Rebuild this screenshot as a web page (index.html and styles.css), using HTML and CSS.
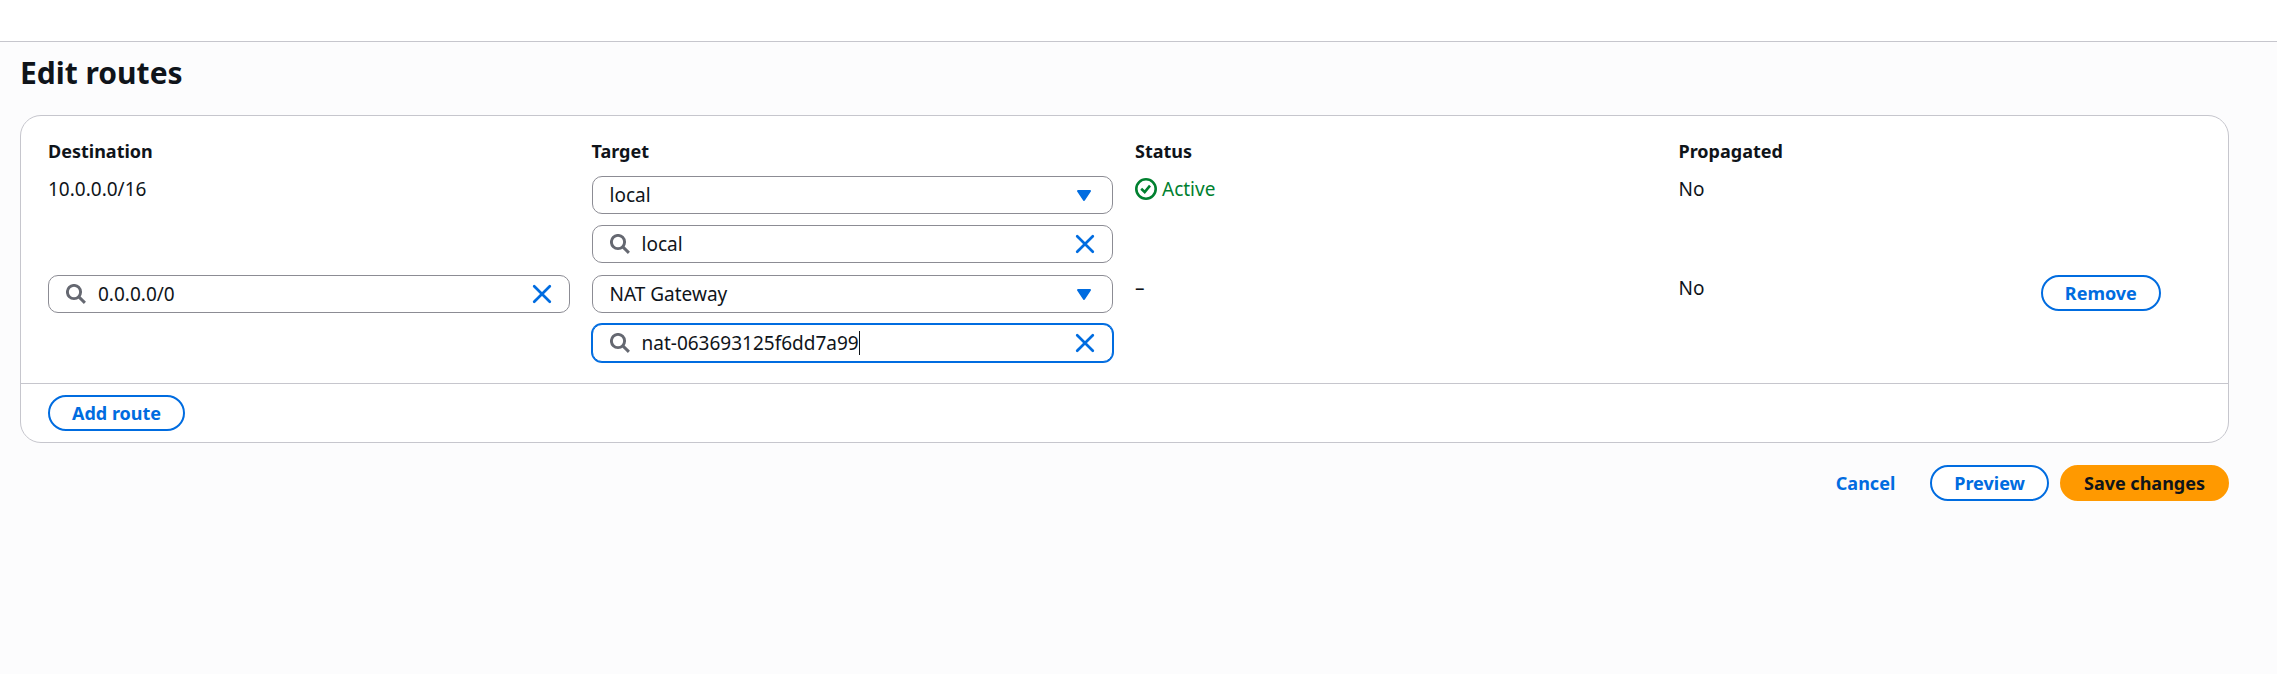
FILE: index.html
```html
<!DOCTYPE html>
<html lang="en">
<head>
<meta charset="utf-8">
<meta name="viewport" content="width=device-width, initial-scale=1">
<title>Edit routes</title>
<link rel="stylesheet" href="styles.css">
</head>
<body>
<svg class="sprite" aria-hidden="true">
  <symbol id="search" viewBox="0 0 20 20"><circle cx="8" cy="8" r="6.6"/><path d="M12.6 12.6 18.9 18.9"/></symbol>
  <symbol id="close" viewBox="0 0 20 20"><path d="M2.2 2.2 17.8 17.8M17.8 2.2 2.2 17.8"/></symbol>
  <symbol id="caret" viewBox="0 0 16 13"><path d="M2 2H14L8 11Z"/></symbol>
  <symbol id="check" viewBox="0 0 22 22"><circle cx="11" cy="11" r="9.7"/><path d="M6.2 10.8 9.7 14 15 7.6"/></symbol>
</svg>
<header class="topbar"></header>
<main class="page">
  <h1 class="title">Edit routes</h1>
  <form class="panel">
    <div class="routes">
      <div class="row row-head">
        <div class="wide">Destination</div>
        <div class="wide">Target</div>
        <div class="wide">Status</div>
        <div class="medium">Propagated</div>
      </div>
      <div class="row">
        <div class="wide value">10.0.0.0/16</div>
        <div class="wide stack">
          <div class="field">
            <select class="control" aria-label="Target type, route 1"><option>local</option></select>
            <svg class="caret-icon"><use href="#caret"/></svg>
          </div>
          <div class="field field-search">
            <svg class="search-icon"><use href="#search"/></svg>
            <input class="control" type="text" value="local" aria-label="Target, route 1">
            <button class="clear" type="button" aria-label="Clear target, route 1"><svg class="close-icon"><use href="#close"/></svg></button>
          </div>
        </div>
        <div class="wide value status"><svg class="check-icon"><use href="#check"/></svg>Active</div>
        <div class="medium value">No</div>
      </div>
      <div class="row">
        <div class="wide">
          <div class="field field-search">
            <svg class="search-icon"><use href="#search"/></svg>
            <input class="control" type="text" value="0.0.0.0/0" aria-label="Destination, route 2">
            <button class="clear" type="button" aria-label="Clear destination, route 2"><svg class="close-icon"><use href="#close"/></svg></button>
          </div>
        </div>
        <div class="wide stack">
          <div class="field">
            <select class="control" aria-label="Target type, route 2"><option>NAT Gateway</option></select>
            <svg class="caret-icon"><use href="#caret"/></svg>
          </div>
          <div class="field field-search field-active">
            <svg class="search-icon"><use href="#search"/></svg>
            <input class="control control-fit" type="text" value="nat-063693125f6dd7a99" aria-label="Target, route 2">
            <span class="text-caret"></span>
            <button class="clear" type="button" aria-label="Clear target, route 2"><svg class="close-icon"><use href="#close"/></svg></button>
          </div>
        </div>
        <div class="wide value">–</div>
        <div class="medium value">No</div>
        <div class="narrow"><button class="button" type="button">Remove</button></div>
      </div>
    </div>
    <div class="panel-footer"><button class="button" type="button">Add route</button></div>
  </form>
  <div class="actions">
    <button class="button button-link" type="button">Cancel</button>
    <button class="button" type="button">Preview</button>
    <button class="button button-primary" type="button">Save changes</button>
  </div>
</main>
</body>
</html>
```
FILE: styles.css
```css
* { box-sizing: border-box; }

body {
  margin: 0;
  background: #fcfcfd;
  color: #0f141a;
  font: 18px/26px "Noto Sans", "Open Sans", sans-serif;
}

button, input, select { font: inherit; color: inherit; margin: 0; }

svg { display: block; flex: none; fill: none; stroke: currentColor; }

.sprite { position: absolute; width: 0; height: 0; }

.topbar {
  height: 42px;
  background: #fff;
  border-bottom: 1px solid #c6c6cd;
}

.page { padding: 11px 48px 40px 20px; }

.title {
  margin: 0 0 22px;
  font-size: 30px;
  line-height: 40px;
  font-weight: 700;
}

.panel {
  background: #fff;
  border: 1px solid #c6c6cd;
  border-radius: 21px;
}

.routes {
  display: flex;
  flex-direction: column;
  gap: 12px;
  padding: 22px 28px 21px 27px;
}

.row {
  display: grid;
  grid-template-columns: repeat(12, minmax(0, 1fr));
  column-gap: 22px;
  align-items: start;
}

.row-head { font-weight: 700; }

.wide { grid-column: span 3; }
.medium { grid-column: span 2; }
.narrow { grid-column: span 1; }

.value, .control { font-size: 19px; }

.stack { display: grid; gap: 11px; }

.field {
  position: relative;
  display: flex;
  align-items: center;
  height: 38px;
  border: 1px solid #8c8c94;
  border-radius: 10px;
  background: #fff;
}

.field-search { padding: 0 17px; gap: 12px; }

.field-active {
  border-color: #006ce0;
  box-shadow: 0 0 0 1px #006ce0;
}

.control {
  flex: 1;
  min-width: 0;
  height: 100%;
  padding: 0;
  border: 0;
  outline: 0;
  background: transparent;
  appearance: none;
}

select.control { padding: 0 48px 0 17px; }

.control-fit { flex: none; field-sizing: content; }

.text-caret {
  width: 1px;
  height: 24px;
  margin-left: -12px;
  background: #0f141a;
}

.search-icon { width: 20px; height: 20px; color: #656871; stroke-width: 2.9; }
.close-icon { width: 20px; height: 20px; color: #006ce0; stroke-width: 2.7; stroke-linecap: round; }

.caret-icon {
  position: absolute;
  right: 20px;
  width: 16px;
  height: 13px;
  fill: #006ce0;
  color: #006ce0;
  stroke-width: 2;
  stroke-linejoin: round;
  pointer-events: none;
}

.clear {
  margin-left: auto;
  padding: 0;
  border: 0;
  background: none;
  cursor: pointer;
}

.status {
  display: flex;
  align-items: center;
  gap: 5px;
  color: #00802f;
}

.check-icon { width: 22px; height: 22px; stroke-width: 2.6; }

.button {
  padding: 3px 22px;
  border: 2px solid #006ce0;
  border-radius: 20px;
  background: #fff;
  color: #006ce0;
  font-weight: 700;
  white-space: nowrap;
  cursor: pointer;
}

.button-link { border-color: transparent; background: transparent; }

.button-primary {
  border-color: #ff9900;
  background: #ff9900;
  color: #0f141a;
}

.panel-footer {
  padding: 11px 27px;
  border-top: 1px solid #c6c6cd;
}

.panel-footer .button { display: block; }

.actions {
  display: flex;
  justify-content: flex-end;
  gap: 11px;
  margin-top: 22px;
}
```
